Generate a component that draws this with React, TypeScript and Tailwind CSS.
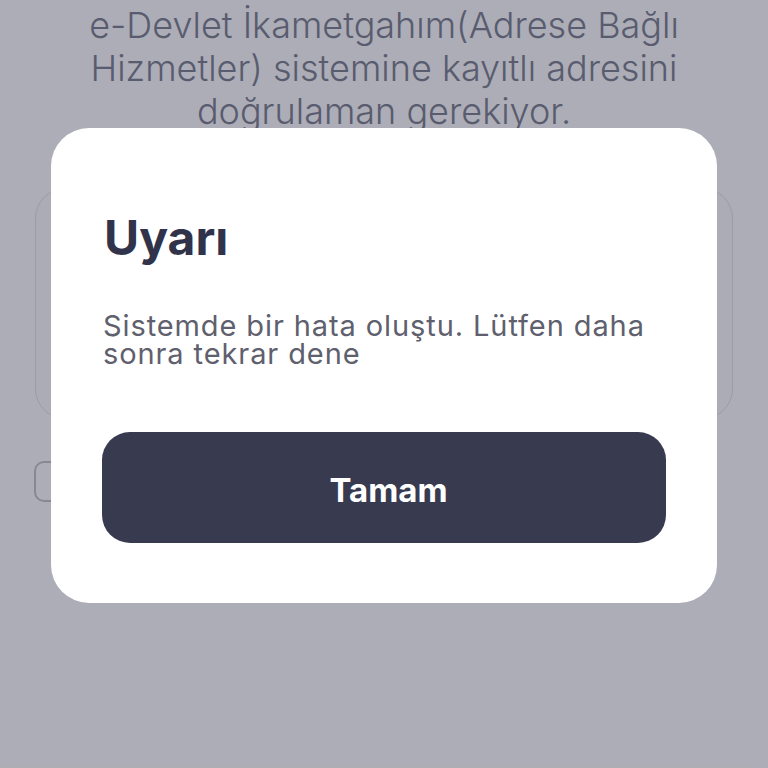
import React from 'react';

function BackgroundPage() {
  return (
    <div className="h-[768px] w-[768px] overflow-hidden bg-white pt-[4px]">
      <p className="mx-auto w-[604px] text-center text-[36px] font-light leading-[43px] text-[#7a7c8c]">
        e-Devlet İkametgahım(Adrese Bağlı Hizmetler) sistemine kayıtlı adresini doğrulaman gerekiyor.
      </p>
      <div className="mx-[35px] mt-[55px] h-[231px] rounded-[30px] border border-[#e3e4e9] bg-[#fdfdfe]" />
      <div className="mx-[34px] mt-[42px] flex items-center gap-3">
        <div className="h-[41px] w-[41px] rounded-[10px] border-2 border-[#c3c4cc]" />
      </div>
    </div>
  );
}

export default function App() {
  return (
    <div className="relative h-[768px] w-[768px] overflow-hidden [font-family:Inter,'Noto_Sans',sans-serif]">
      <BackgroundPage />
      <div className="absolute inset-0 bg-[#26283e]/[0.38]" />
      <div className="absolute inset-0 flex justify-center pt-[128px]">
        <div className="flex h-[475px] w-[666px] flex-col rounded-[38px] bg-white px-[51px] pb-[60px] pt-[82px]">
          <h1 className="pl-[2px] text-[48px] font-bold leading-[56px] text-[#30334a]">Uyarı</h1>
          <p className="mt-[46px] pl-[1px] text-[29px] leading-[28px] tracking-[0.9px] text-[#5f606e]">
            Sistemde bir hata oluştu. Lütfen daha sonra tekrar dene
          </p>
          <button className="mt-auto flex h-[111px] w-full items-center justify-center rounded-[28px] bg-[#383b50] pl-[9px] pt-[6px] text-[33px] font-bold text-white">
            Tamam
          </button>
        </div>
      </div>
    </div>
  );
}
